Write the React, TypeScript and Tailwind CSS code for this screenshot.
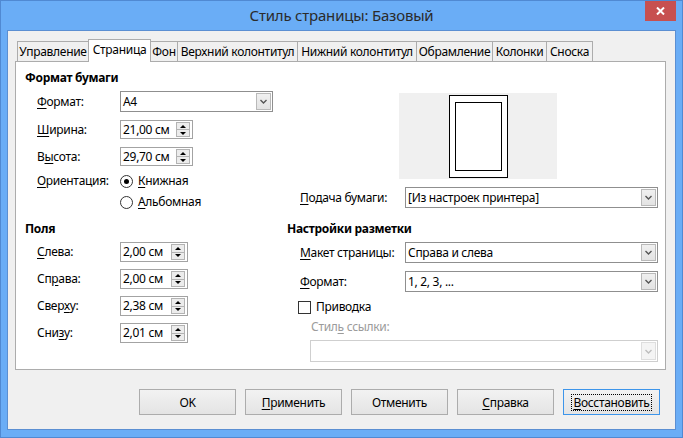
import type { ReactNode } from 'react'

// access-key label: underline one letter
function Key({ t, i }: { t: string; i: number }) {
  return (
    <>
      {t.slice(0, i)}
      <span className="underline underline-offset-2">{t[i]}</span>
      {t.slice(i + 1)}
    </>
  )
}

function Chevron({ color = '#555' }: { color?: string }) {
  return (
    <svg width="7" height="5" viewBox="0 0 7 5">
      <path d="M0.5 1 L3.5 4 L6.5 1" fill="none" stroke={color} strokeWidth="1.4" />
    </svg>
  )
}

function Select({ value, w, h = 'h-[21px]', disabled }: { value?: string; w: string; h?: string; disabled?: boolean }) {
  return (
    <div
      className={`${w} ${h} flex items-stretch bg-white border ${
        disabled ? 'border-[#cfcfcf]' : 'border-[#8f8f8f]'
      }`}
    >
      <span className="flex-1 pl-[2px] flex items-center leading-[16px] whitespace-nowrap">{value}</span>
      <div
        className={`w-[15px] m-[1px] flex items-center justify-center border ${
          disabled ? 'border-[#dedede] bg-[#f4f4f4]' : 'border-[#b9b9b9] bg-gradient-to-b from-[#f0f0f0] to-[#e3e3e3]'
        }`}
      >
        <Chevron color={disabled ? '#bdbdbd' : '#555'} />
      </div>
    </div>
  )
}

function Spin({ value, w, h }: { value: string; w: string; h: string }) {
  return (
    <div className={`${w} ${h} flex items-stretch bg-white border border-[#a3a3a3]`}>
      <span className="flex-1 pl-[2px] flex items-center leading-[16px] whitespace-nowrap">{value}</span>
      <div className="w-[14px] my-[1px] mr-[2px] flex flex-col border border-[#b3b3b3] bg-[#ececec]">
        <div className="flex-1 flex items-center justify-center">
          <svg width="6" height="3" viewBox="0 0 6 3">
            <path d="M0 3 L3 0 L6 3 Z" fill="#000" />
          </svg>
        </div>
        <div className="flex-1 flex items-center justify-center border-t border-[#b3b3b3]">
          <svg width="6" height="3" viewBox="0 0 6 3">
            <path d="M0 0 L6 0 L3 3 Z" fill="#000" />
          </svg>
        </div>
      </div>
    </div>
  )
}

function Row({ label, lw, className, children }: { label?: ReactNode; lw: string; className: string; children: ReactNode }) {
  return (
    <div className={`flex items-center ${className}`}>
      <span className={`${lw} leading-[16px] whitespace-nowrap`}>{label}</span>
      {children}
    </div>
  )
}

function Radio({ checked, children }: { checked?: boolean; children: ReactNode }) {
  return (
    <div className="flex items-center gap-[5px]">
      <span className="w-[13px] h-[13px] rounded-full border border-[#333] bg-white flex items-center justify-center">
        {checked && <span className="w-[5px] h-[5px] rounded-full bg-black" />}
      </span>
      <span className="leading-[16px]">{children}</span>
    </div>
  )
}

const tabs = [
  { name: 'Управление', w: 'w-[72px]' },
  { name: 'Страница', w: 'w-[63px]', active: true },
  { name: 'Фон', w: 'w-[28px]' },
  { name: 'Верхний колонтитул', w: 'w-[121px]' },
  { name: 'Нижний колонтитул', w: 'w-[120px]' },
  { name: 'Обрамление', w: 'w-[77px]' },
  { name: 'Колонки', w: 'w-[55px]' },
  { name: 'Сноска', w: 'w-[47px]' },
]

function Btn({ children, focused }: { children: ReactNode; focused?: boolean }) {
  return (
    <button
      className={`w-[97px] h-[26px] flex items-center justify-center border bg-gradient-to-b from-[#f2f2f2] to-[#e4e4e4] ${
        focused ? 'border-[#3d95ea]' : 'border-[#acacac]'
      }`}
    >
      <span className={`leading-[15px] px-[1px] ${focused ? 'border border-dotted border-black' : ''}`}>{children}</span>
    </button>
  )
}

export default function App() {
  return (
    <div className="w-[683px] h-[438px] bg-[#6aadf6] border border-[#5089d2] flex flex-col px-[6px] pb-[7px] font-['Segoe_UI','Noto_Sans',sans-serif] text-[12px] tracking-[-0.3px] text-black">
      {/* Title bar */}
      <div className="h-[29px] grid grid-cols-[1fr_auto_1fr] -mx-[6px] px-[6px]">
        <div />
        <div className="text-[15px] leading-[29px] tracking-[-0.2px] text-[#2b2b2b]">Стиль страницы: Базовый</div>
        <div className="flex justify-end">
          <div className="w-[31px] h-[20px] bg-[#c75050] flex items-center justify-center">
            <svg width="9" height="8" viewBox="0 0 9 8">
              <path d="M1 0.5 L8 7.5 M8 0.5 L1 7.5" stroke="#fff" strokeWidth="2" />
            </svg>
          </div>
        </div>
      </div>

      {/* Dialog body */}
      <div className="h-[400px] bg-[#f0f0f0] border border-[#5b8fd2] flex flex-col">
        {/* Tabs */}
        <div className="flex items-end h-[22px] mt-[8px] pl-[9px] relative z-10">
          {tabs.map((t) =>
            t.active ? (
              <div
                key={t.name}
                className={`${t.w} h-[23px] -mb-px -mr-px relative z-10 bg-white border border-b-0 border-[#acacac] flex items-center justify-center leading-[16px] pb-[2px]`}
              >
                {t.name}
              </div>
            ) : (
              <div
                key={t.name}
                className={`${t.w} h-[20px] -mr-px bg-[#f0f0f0] border border-b-0 border-[#acacac] flex items-center justify-center leading-[16px] whitespace-nowrap`}
              >
                {t.name}
              </div>
            )
          )}
        </div>

        {/* Page panel */}
        <div className="ml-[7px] w-[651px] h-[309px] bg-white border border-[#acacac] grid grid-cols-[262px_1fr] pl-[9px] pt-[8px]">
          {/* Left column */}
          <div className="flex flex-col">
            <div className="font-bold h-[16px] leading-[16px]">Формат бумаги</div>
            <Row lw="w-[83px]" className="mt-[5px] h-[21px] pl-[12px]" label={<Key t="Формат:" i={0} />}>
              <Select value="A4" w="w-[153px]" />
            </Row>
            <Row lw="w-[83px]" className="mt-[8px] h-[19px] pl-[12px]" label={<Key t="Ширина:" i={0} />}>
              <Spin value="21,00 см" w="w-[73px]" h="h-[19px]" />
            </Row>
            <Row lw="w-[83px]" className="mt-[8px] h-[19px] pl-[12px]" label={<Key t="Высота:" i={1} />}>
              <Spin value="29,70 см" w="w-[73px]" h="h-[19px]" />
            </Row>
            <Row lw="w-[83px]" className="mt-[5px] h-[20px] pl-[12px]" label={<Key t="Ориентация:" i={0} />}>
              <Radio checked>
                <Key t="Книжная" i={0} />
              </Radio>
            </Row>
            <Row lw="w-[83px]" className="mt-[1px] h-[20px] pl-[12px]">
              <Radio>
                <Key t="Альбомная" i={0} />
              </Radio>
            </Row>

            <div className="font-bold h-[16px] leading-[16px] mt-[9px]">Поля</div>
            <Row lw="w-[83px]" className="mt-[5px] h-[20px] pl-[12px]" label={<Key t="Слева:" i={0} />}>
              <Spin value="2,00 см" w="w-[68px]" h="h-[20px]" />
            </Row>
            <Row lw="w-[83px]" className="mt-[7px] h-[20px] pl-[12px]" label={<Key t="Справа:" i={2} />}>
              <Spin value="2,00 см" w="w-[68px]" h="h-[20px]" />
            </Row>
            <Row lw="w-[83px]" className="mt-[7px] h-[20px] pl-[12px]" label={<Key t="Сверху:" i={4} />}>
              <Spin value="2,38 см" w="w-[68px]" h="h-[20px]" />
            </Row>
            <Row lw="w-[83px]" className="mt-[7px] h-[20px] pl-[12px]" label={<Key t="Снизу:" i={3} />}>
              <Spin value="2,01 см" w="w-[68px]" h="h-[20px]" />
            </Row>
          </div>

          {/* Right column */}
          <div className="flex flex-col">
            <div className="mt-[23px] ml-[112px] w-[158px] h-[86px] bg-[#f0f0f0] flex items-center justify-center">
              <div className="w-[59px] h-[83px] border border-black bg-white flex items-center justify-center">
                <div className="w-[47px] h-[69px] border border-black" />
              </div>
            </div>
            <Row lw="w-[105px]" className="mt-[8px] h-[21px] pl-[13px]" label={<Key t="Подача бумаги:" i={0} />}>
              <Select value="[Из настроек принтера]" w="w-[253px]" />
            </Row>

            <div className="font-bold h-[16px] leading-[16px] mt-[13px]">Настройки разметки</div>
            <Row lw="w-[105px]" className="mt-[5px] h-[21px] pl-[13px]" label={<Key t="Макет страницы:" i={0} />}>
              <Select value="Справа и слева" w="w-[253px]" />
            </Row>
            <Row lw="w-[105px]" className="mt-[8px] h-[21px] pl-[13px]" label={<Key t="Формат:" i={0} />}>
              <Select value="1, 2, 3, ..." w="w-[253px]" />
            </Row>
            <div className="mt-[7px] h-[16px] pl-[11px] flex items-center gap-[5px]">
              <span className="w-[13px] h-[13px] border border-[#333] bg-white" />
              <span className="leading-[16px]">Приводка</span>
            </div>
            <div className="mt-[4px] h-[16px] pl-[24px] leading-[16px] text-[#9b9b9b]">
              <Key t="Стиль ссылки:" i={4} />
            </div>
            <div className="mt-[5px] ml-[23px]">
              <Select w="w-[348px]" h="h-[22px]" disabled />
            </div>
          </div>
        </div>

        {/* Buttons */}
        <div className="mt-[19px] flex justify-end gap-[9px] pr-[15px]">
          <Btn>OK</Btn>
          <Btn>
            <Key t="Применить" i={0} />
          </Btn>
          <Btn>Отменить</Btn>
          <Btn>
            <Key t="Справка" i={0} />
          </Btn>
          <Btn focused>
            <Key t="Восстановить" i={0} />
          </Btn>
        </div>
      </div>
    </div>
  )
}
